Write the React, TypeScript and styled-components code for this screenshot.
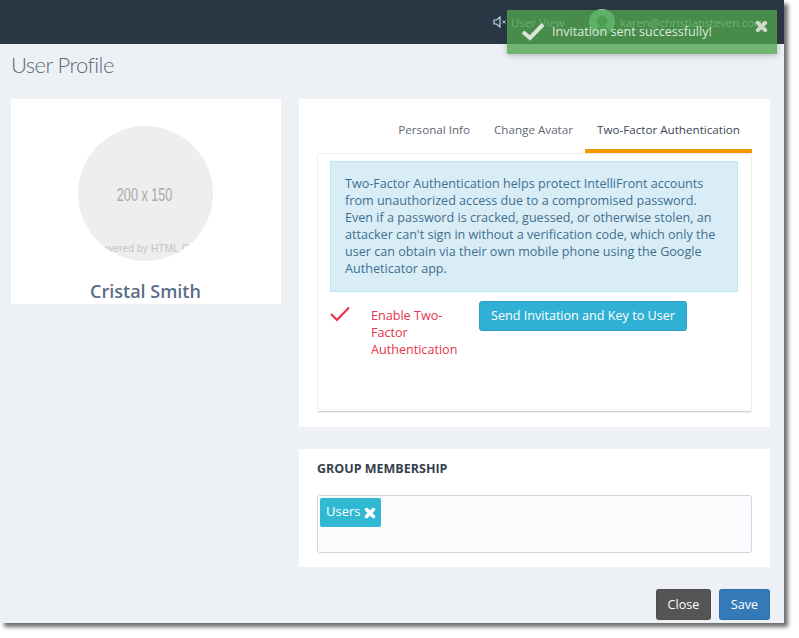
import React from "react";
import styled, { createGlobalStyle } from "styled-components";

const Global = createGlobalStyle`
  html, body { margin: 0; padding: 0; background: #fff; }
  body { font-family: "Open Sans", "Liberation Sans", sans-serif; width: 799px; height: 638px; overflow: hidden; }
  * { box-sizing: border-box; }
`;

const Window = styled.div`
  position: relative;
  width: 784px;
  height: 623px;
  background: #edf0f5;
  box-shadow: 4px 4px 4px rgba(50, 50, 50, 0.7);
`;

const Header = styled.header`
  height: 44px;
  background: #2a3644;
  display: flex;
  align-items: center;
  padding-left: 493px;
  font-size: 11.6px;
`;

const HeaderView = styled.span`
  display: flex;
  align-items: center;
  gap: 3px;
  width: 96px;
  color: #b8d8ee;
`;

const HeaderAvatar = styled.span`
  width: 26px;
  height: 26px;
  border-radius: 50%;
  margin-right: 5px;
  background: #8fe0c4;
  display: flex;
  align-items: flex-end;
  justify-content: center;
  overflow: hidden;
`;

const HeaderEmail = styled.span`
  color: #c8f0dc;
  font-size: 11.2px;
  white-space: nowrap;
`;

const Toast = styled.div`
  position: absolute;
  left: 507px;
  top: 10px;
  width: 270px;
  height: 44px;
  background: rgba(79, 164, 77, 0.78);
  box-shadow: 0 1px 6px rgba(60, 60, 60, 0.35);
  color: #dfe8df;
  font-size: 12.6px;
  display: flex;
  align-items: flex-start;
  padding: 12px 0 0 14px;
`;

const ToastText = styled.span`
  margin-left: 7px;
  line-height: 19px;
  white-space: nowrap;
`;

const ToastClose = styled.span`
  position: absolute;
  right: 9px;
  top: 10px;
  display: flex;
`;

const Title = styled.h1`
  margin: 0;
  height: 55px;
  padding: 7px 0 0 11px;
  font-family: Lato, "Open Sans", sans-serif;
  font-weight: 300;
  font-size: 22px;
  line-height: 27px;
  color: #5f6b78;
  letter-spacing: -0.6px;
`;

const Columns = styled.div`
  display: grid;
  grid-template-columns: 270px 471px;
  column-gap: 18px;
  padding-left: 11px;
  align-items: start;
`;

const ProfileCard = styled.section`
  background: #fff;
  height: 205px;
  display: flex;
  flex-direction: column;
  align-items: center;
  padding: 27px 1px 0 0;
`;

const Circle = styled.div`
  width: 135px;
  height: 135px;
  border-radius: 50%;
  background: #eeeeee;
  overflow: hidden;
  display: flex;
  flex-direction: column;
  align-items: center;
  font-family: "Liberation Sans", Arial, sans-serif;
  white-space: nowrap;
`;

const PlaceholderSize = styled.span`
  margin: 59px 2px 0 0;
  font-size: 18px;
  line-height: 21px;
  color: #aaaaaa;
  transform: scaleX(0.7);
`;

const PlaceholderNote = styled.span`
  margin: 36px 0 0 8px;
  font-size: 11.5px;
  line-height: 13px;
  color: #c4c4c4;
  letter-spacing: 0.2px;
  transform: scaleX(0.87);
`;

const Name = styled.div`
  margin-top: 18px;
  font-size: 18px;
  line-height: 24px;
  font-weight: 600;
  color: #5a6d87;
`;

const RightColumn = styled.div`
  display: flex;
  flex-direction: column;
`;

const TabsPanel = styled.section`
  background: #fff;
  height: 328px;
  padding: 0 18px;
`;

const TabBar = styled.nav`
  height: 54px;
  display: flex;
  justify-content: flex-end;
`;

const Tab = styled.div<{ $active?: boolean }>`
  height: 54px;
  padding: 22px 12px 0;
  font-size: 11.65px;
  line-height: 17px;
  color: ${(p) => (p.$active ? "#3a4654" : "#5f6872")};
  border-bottom: 4px solid ${(p) => (p.$active ? "#f39700" : "transparent")};
`;

const TabBody = styled.div`
  height: 259px;
  border: 1px solid #ececec;
  border-bottom-color: #d0d2d4;
  border-radius: 2px;
  padding: 7px 13px 0 12px;
  box-shadow: 0 1px 1px rgba(0, 0, 0, 0.06);
`;

const Info = styled.div`
  height: 131px;
  background: #d9edf7;
  border: 1px solid #bce8f1;
  padding: 13px 14px 0;
  font-size: 12.6px;
  line-height: 17px;
  color: #3f6f8f;
`;

const EnableRow = styled.div`
  display: flex;
  align-items: flex-start;
  margin-top: 9px;
`;

const CheckSlot = styled.span`
  width: 41px;
  display: flex;
  padding-top: 5px;
`;

const EnableLabel = styled.div`
  width: 108px;
  padding: 6px 16px 0 0;
  font-size: 12.6px;
  line-height: 17px;
  color: #e8344e;
`;

const SendButton = styled.button`
  height: 30px;
  padding: 0 11px 2px;
  border: 1px solid #2aa0c4;
  border-radius: 3px;
  background: #31b0d5;
  color: #fff;
  font-family: inherit;
  font-size: 12.6px;
  white-space: nowrap;
`;

const GroupPanel = styled.section`
  margin-top: 22px;
  height: 118px;
  background: #fff;
  padding: 12px 18px 0;
`;

const GroupTitle = styled.h2`
  margin: 0;
  font-size: 12.5px;
  line-height: 16px;
  font-weight: 700;
  color: #36404c;
`;

const TagBox = styled.div`
  margin-top: 18px;
  height: 58px;
  background: #fafbfd;
  border: 1px solid #cfd6e2;
  border-radius: 3px;
  padding: 2px;
`;

const Tag = styled.span`
  display: inline-flex;
  align-items: flex-start;
  height: 29px;
  width: 61px;
  padding: 5px 0 0 6px;
  gap: 4px;
  border-radius: 2px;
  background: #31b9d4;
  color: #fff;
  font-size: 13px;
  line-height: 17px;
`;

const TagClose = styled.span`
  display: flex;
  margin-top: 4px;
`;

const Footer = styled.footer`
  display: flex;
  justify-content: flex-end;
  gap: 8px;
  margin-top: 22px;
`;

const FooterButton = styled.button<{ $bg: string; $w: number }>`
  width: ${(p) => p.$w}px;
  height: 31px;
  border: 1px solid rgba(0, 0, 0, 0.08);
  border-radius: 3px;
  background: ${(p) => p.$bg};
  color: #fff;
  font-family: inherit;
  font-size: 12.6px;
  padding: 0;
`;

const XIcon = ({ size, color }: { size: number; color: string }) => (
  <svg width={size} height={size} viewBox="0 0 12 12">
    <path d="M2.6 2.6 L9.4 9.4 M9.4 2.6 L2.6 9.4" stroke={color} strokeWidth="3.6" strokeLinecap="round" fill="none" />
  </svg>
);

export default function App() {
  return (
    <>
      <Global />
      <Window>
        <Header>
          <HeaderView>
            <svg width="15" height="12" viewBox="0 0 15 12">
              <path d="M1 4 H3.5 L7 1 V11 L3.5 8 H1 Z" fill="none" stroke="#b8d8ee" strokeWidth="1.2" />
              <path d="M9.5 4.5 L12.5 7.5 M12.5 4.5 L9.5 7.5" stroke="#b8d8ee" strokeWidth="1" />
            </svg>
            User View
          </HeaderView>
          <HeaderAvatar>
            <svg width="24" height="24" viewBox="0 0 24 24">
              <circle cx="12" cy="10" r="5.5" fill="#4a8f76" />
              <path d="M3 24 C4 17 8 15.5 12 15.5 C16 15.5 20 17 21 24 Z" fill="#4a8f76" />
            </svg>
          </HeaderAvatar>
          <HeaderEmail>karen@christiansteven.com</HeaderEmail>
        </Header>
        <Toast>
          <svg width="24" height="19" viewBox="0 0 24 19">
            <path d="M2 10 L9 16 L22 2.5" stroke="#dbe4d9" strokeWidth="4" fill="none" />
          </svg>
          <ToastText>Invitation sent successfully!</ToastText>
          <ToastClose>
            <XIcon size={13} color="#d0dace" />
          </ToastClose>
        </Toast>
        <Title>User Profile</Title>
        <Columns>
          <ProfileCard>
            <Circle>
              <PlaceholderSize>200 x 150</PlaceholderSize>
              <PlaceholderNote>Powered by HTML.COM</PlaceholderNote>
            </Circle>
            <Name>Cristal Smith</Name>
          </ProfileCard>
          <RightColumn>
            <TabsPanel>
              <TabBar>
                <Tab>Personal Info</Tab>
                <Tab>Change Avatar</Tab>
                <Tab $active>Two-Factor Authentication</Tab>
              </TabBar>
              <TabBody>
                <Info>
                  Two-Factor Authentication helps protect IntelliFront accounts from unauthorized access due to a
                  compromised password. Even if a password is cracked, guessed, or otherwise stolen, an attacker can't
                  sign in without a verification code, which only the user can obtain via their own mobile phone using
                  the Google Autheticator app.
                </Info>
                <EnableRow>
                  <CheckSlot>
                    <svg width="20" height="16" viewBox="0 0 20 16">
                      <path d="M1 8 L7 14 L19 1.5" stroke="#e8344e" strokeWidth="2.2" fill="none" />
                    </svg>
                  </CheckSlot>
                  <EnableLabel>Enable Two-Factor Authentication</EnableLabel>
                  <SendButton>Send Invitation and Key to User</SendButton>
                </EnableRow>
              </TabBody>
            </TabsPanel>
            <GroupPanel>
              <GroupTitle>GROUP MEMBERSHIP</GroupTitle>
              <TagBox>
                <Tag>
                  Users
                  <TagClose>
                    <XIcon size={12} color="#fff" />
                  </TagClose>
                </Tag>
              </TagBox>
            </GroupPanel>
            <Footer>
              <FooterButton $bg="#555555" $w={55}>Close</FooterButton>
              <FooterButton $bg="#337ab7" $w={51}>Save</FooterButton>
            </Footer>
          </RightColumn>
        </Columns>
      </Window>
    </>
  );
}
